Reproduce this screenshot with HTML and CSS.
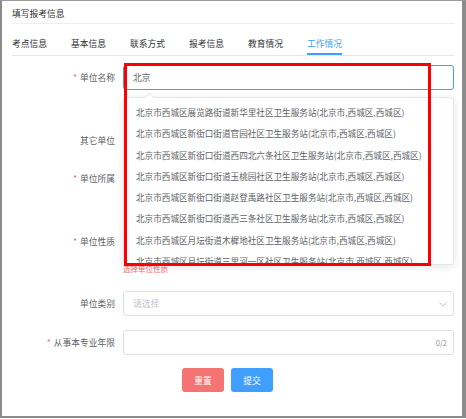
FILE: index.html
```html
<!DOCTYPE html>
<html lang="zh-CN">
<head>
  <meta charset="UTF-8" />
  <title>填写报考信息</title>
  <link rel="stylesheet" href="styles.css">
</head>
<body>
  <div class="frame">
    <div class="card-title">填写报考信息</div>

    <div class="tabs">
      <div class="tab">考点信息</div>
      <div class="tab">基本信息</div>
      <div class="tab">联系方式</div>
      <div class="tab">报考信息</div>
      <div class="tab">教育情况</div>
      <div class="tab active">工作情况</div>
    </div>

    <div class="form">
      <div class="form-item tall">
        <label class="label required">单位名称</label>
        <div class="field">
          <div class="input-wrap">
            <div class="input focused">北京</div>

            <!-- autocomplete suggestions -->
            <div class="popper">
              <span class="popper-arrow"></span>
              <ul class="suggest">
                <li>北京市西城区展览路街道新华里社区卫生服务站(北京市,西城区,西城区)</li>
                <li>北京市西城区新街口街道官园社区卫生服务站(北京市,西城区,西城区)</li>
                <li>北京市西城区新街口街道西四北六条社区卫生服务站(北京市,西城区,西城区)</li>
                <li>北京市西城区新街口街道玉桃园社区卫生服务站(北京市,西城区,西城区)</li>
                <li>北京市西城区新街口街道赵登禹路社区卫生服务站(北京市,西城区,西城区)</li>
                <li>北京市西城区新街口街道西三条社区卫生服务站(北京市,西城区,西城区)</li>
                <li>北京市西城区月坛街道木樨地社区卫生服务站(北京市,西城区,西城区)</li>
                <li>北京市西城区月坛街道三里河一区社区卫生服务站(北京市,西城区,西城区)</li>
              </ul>
            </div>

            <div class="highlight"></div>
          </div>
        </div>
      </div>

      <div class="form-item">
        <label class="label">其它单位</label>
        <div class="field"><div class="input"></div></div>
      </div>

      <div class="form-item tall">
        <label class="label required">单位所属</label>
        <div class="field"><div class="input"></div></div>
      </div>

      <div class="form-item tall">
        <label class="label required">单位性质</label>
        <div class="field">
          <div class="input"></div>
          <div class="error">选择单位性质</div>
        </div>
      </div>

      <div class="form-item">
        <label class="label">单位类别</label>
        <div class="field">
          <div class="input select">
            <span class="placeholder">请选择</span>
            <svg class="chevron" width="8" height="5" viewBox="0 0 8 5"><path d="M0.5 0.5 L4 4 L7.5 0.5" fill="none" stroke="#c0c4cc" stroke-width="0.9"/></svg>
          </div>
        </div>
      </div>

      <div class="form-item">
        <label class="label required">从事本专业年限</label>
        <div class="field">
          <div class="input with-count"><span class="count">0/2</span></div>
        </div>
      </div>

      <div class="actions">
        <button class="btn danger">重置</button>
        <button class="btn primary">提交</button>
      </div>
    </div>
  </div>
</body>
</html>
```

FILE: styles.css
```css
* {
  box-sizing: border-box;
}

body {
  margin: 0;
  background: #fff;
  font-family: "Noto Sans CJK SC", "Noto Sans", sans-serif;
  font-size: 8.75px;
  color: #606266;
}

.frame {
  position: relative;
  width: 466px;
  height: 418px;
  border-top: 1px solid #9a9a9a;
  border-left: 2px solid #8c8c8c;
  border-right: 4px solid #8c8c8c;
  border-bottom: 2px solid #8c8c8c;
  padding: 0 8px 0 10px;
  overflow: hidden;
}

.card-title {
  padding: 6px 0 2px;
  line-height: 14px;
  color: #303133;
  border-bottom: 1px solid #ebeef5;
}

/* tabs */
.tabs {
  display: flex;
  gap: 24px;
  height: 32px;
  padding-top: 13px;
  border-bottom: 1px solid #e4e7ed;
}

.tab {
  line-height: 14px;
  height: 18px;
  color: #303133;
}

.tab.active {
  color: #409eff;
  border-bottom: 2px solid #409eff;
}

/* form */
.form {
  padding-top: 9px;
}

.form-item {
  display: flex;
  min-height: 25px;
  margin-bottom: 13.5px;
}

.form-item.tall {
  min-height: 49px;
}

.label {
  width: 111px;
  flex-shrink: 0;
  padding-right: 8px;
  text-align: right;
  line-height: 25px;
  color: #606266;
}

.label.required::before {
  content: "*";
  color: #f56c6c;
  margin-right: 3px;
}

.field {
  flex: 1;
}

.input-wrap {
  position: relative;
}

.input {
  position: relative;
  height: 25px;
  line-height: 23px;
  padding: 0 9px;
  border: 1px solid #dcdfe6;
  border-radius: 3px;
  color: #606266;
}

.input.focused {
  border-color: #409eff;
}

.placeholder {
  color: #c0c4cc;
}

.chevron {
  position: absolute;
  right: 6px;
  top: 10px;
}

.count {
  position: absolute;
  right: 6px;
  top: 0;
  font-size: 7.5px;
  color: #909399;
}

.error {
  margin-top: 9px;
  line-height: 11px;
  font-size: 7.5px;
  color: #f56c6c;
}

/* autocomplete dropdown */
.popper {
  position: absolute;
  top: 32px;
  left: 0;
  right: 0;
  height: 168px;
  background: #fff;
  border: 1px solid #e4e7ed;
  border-radius: 3px;
  box-shadow: 0 2px 8px rgba(0, 0, 0, 0.1);
  z-index: 5;
}

.popper-arrow {
  position: absolute;
  top: -4px;
  left: 22px;
  width: 7px;
  height: 7px;
  background: #fff;
  border-top: 1px solid #e4e7ed;
  border-left: 1px solid #e4e7ed;
  transform: rotate(45deg);
}

.suggest {
  list-style: none;
  margin: 0;
  padding: 4px 0 0;
  height: 100%;
  overflow: hidden;
}

.suggest li {
  height: 21.25px;
  line-height: 21.25px;
  padding: 0 12px;
  white-space: nowrap;
  font-size: 8.6px;
  color: #606266;
}

/* red annotation box */
.highlight {
  position: absolute;
  left: 1px;
  top: -2px;
  width: 307px;
  height: 203px;
  border: 3px solid #ff0000;
  z-index: 6;
}

/* buttons */
.actions {
  display: flex;
  gap: 7px;
  padding-left: 170px;
  margin-top: 0.5px;
}

.btn {
  width: 42px;
  height: 24px;
  border: none;
  border-radius: 3px;
  font-family: inherit;
  font-size: 8.75px;
  color: #fff;
  cursor: pointer;
}

.btn.danger {
  background: #f47373;
}

.btn.primary {
  background: #409eff;
}
```
